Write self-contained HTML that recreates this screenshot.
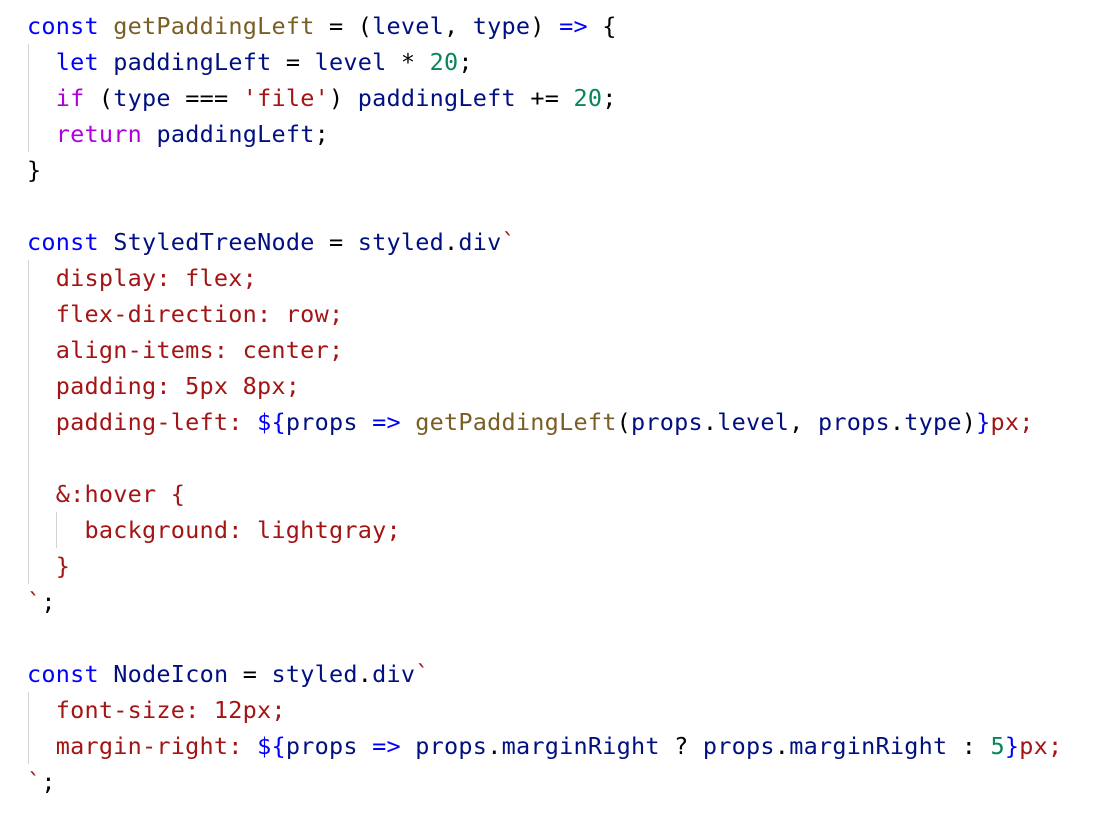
<!DOCTYPE html>
<html><head><meta charset="utf-8"><style>
body{margin:0;background:#fff;width:1114px;height:824px;overflow:hidden}
pre{margin:0;position:absolute;left:27px;top:8px;font-family:"DejaVu Sans Mono","Liberation Mono",monospace;font-size:23.5px;letter-spacing:0.23px;line-height:36px;color:#000}
.k{color:#0000ff}.f{color:#795e26}.v{color:#001080}.p{color:#af00db}.s{color:#a31515}.n{color:#098658}
.g{position:absolute;width:1px;background:#d3d3d3}
</style></head><body>
<div class="g" style="left:28px;top:44px;height:108px"></div>
<div class="g" style="left:28px;top:260px;height:324px"></div>
<div class="g" style="left:56px;top:512px;height:36px"></div>
<div class="g" style="left:28px;top:692px;height:72px"></div>
<pre><span class="k">const</span> <span class="f">getPaddingLeft</span> = (<span class="v">level</span>, <span class="v">type</span>) <span class="k">=&gt;</span> {
  <span class="k">let</span> <span class="v">paddingLeft</span> = <span class="v">level</span> * <span class="n">20</span>;
  <span class="p">if</span> (<span class="v">type</span> === <span class="s">'file'</span>) <span class="v">paddingLeft</span> += <span class="n">20</span>;
  <span class="p">return</span> <span class="v">paddingLeft</span>;
}

<span class="k">const</span> <span class="v">StyledTreeNode</span> = <span class="v">styled</span>.<span class="v">div</span><span class="s">`</span>
<span class="s">  display: flex;</span>
<span class="s">  flex-direction: row;</span>
<span class="s">  align-items: center;</span>
<span class="s">  padding: 5px 8px;</span>
<span class="s">  padding-left: </span><span class="k">${</span><span class="v">props</span> <span class="k">=&gt;</span> <span class="f">getPaddingLeft</span>(<span class="v">props</span>.<span class="v">level</span>, <span class="v">props</span>.<span class="v">type</span>)<span class="k">}</span><span class="s">px;</span>

<span class="s">  &amp;:hover {</span>
<span class="s">    background: lightgray;</span>
<span class="s">  }</span>
<span class="s">`</span>;

<span class="k">const</span> <span class="v">NodeIcon</span> = <span class="v">styled</span>.<span class="v">div</span><span class="s">`</span>
<span class="s">  font-size: 12px;</span>
<span class="s">  margin-right: </span><span class="k">${</span><span class="v">props</span> <span class="k">=&gt;</span> <span class="v">props</span>.<span class="v">marginRight</span> ? <span class="v">props</span>.<span class="v">marginRight</span> : <span class="n">5</span><span class="k">}</span><span class="s">px;</span>
<span class="s">`</span>;</pre>
</body></html>
